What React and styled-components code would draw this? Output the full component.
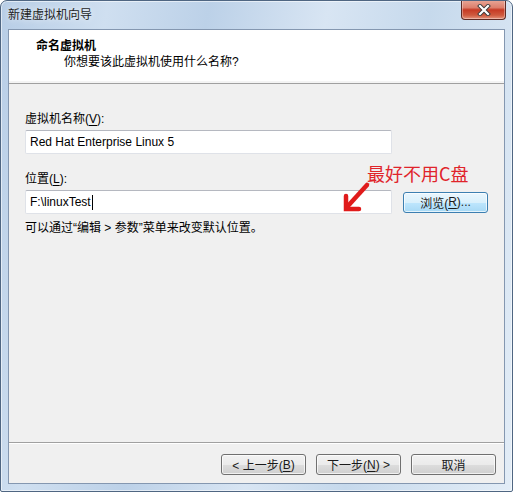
import React from "react";
import styled, { createGlobalStyle } from "styled-components";

const GlobalStyle = createGlobalStyle`
  html, body {
    margin: 0;
    padding: 0;
    background: #ffffff;
  }
  body {
    font-family: "Liberation Sans", "Noto Sans CJK SC", sans-serif;
    font-size: 12px;
    color: #000;
  }
`;

const UI_FONT = `"Liberation Sans", "Noto Sans CJK SC", sans-serif`;

const Window = styled.div`
  position: relative;
  width: 513px;
  height: 492px;
  box-sizing: border-box;
  display: flex;
  flex-direction: column;
  border: 1px solid #4f6682;
  border-radius: 7px 7px 2px 2px;
  background: linear-gradient(
    100deg,
    #b7cde6 0%,
    #cfdff0 18%,
    #bcd1e8 35%,
    #d8e5f3 55%,
    #c6d9ec 72%,
    #e3edf7 100%
  );
  box-shadow: inset 0 0 0 1px rgba(255, 255, 255, 0.55);
  overflow: hidden;
`;

const TitleBar = styled.div`
  height: 28px;
  display: flex;
  align-items: flex-start;
  padding-left: 7px;
`;

const Title = styled.div`
  font-family: ${UI_FONT};
  font-size: 12px;
  line-height: 14px;
  margin-top: 7px;
  color: #1e1e1e;
  text-shadow: 0 0 6px rgba(255, 255, 255, 0.9);
`;

const CloseButton = styled.div`
  margin-left: auto;
  margin-right: 6px;
  margin-top: -1px;
  width: 45px;
  height: 20px;
  box-sizing: border-box;
  border: 1px solid #5d2a24;
  border-top: none;
  border-radius: 0 0 4px 4px;
  background: linear-gradient(
    180deg,
    #e9a898 0%,
    #dd7f6c 40%,
    #c63a24 52%,
    #cf5a3e 80%,
    #e4937c 100%
  );
  box-shadow: inset 0 0 0 1px rgba(255, 255, 255, 0.35);
  display: flex;
  align-items: center;
  justify-content: center;
`;

const Client = styled.div`
  flex: 1;
  margin: 0 7px 7px 7px;
  border: 1px solid #8497b0;
  background: #f0f0f0;
  display: flex;
  flex-direction: column;
`;

const Header = styled.div`
  height: 54px;
  background: #ffffff;
  border-bottom: 1px solid #a0a0a0;
  box-shadow: inset 0 -2px 0 #f4f4f4;
  padding: 8px 0 0 27px;
  box-sizing: border-box;
`;

const HeaderTitle = styled.div`
  font-family: ${UI_FONT};
  font-weight: bold;
  font-size: 12px;
  line-height: 16px;
`;

const HeaderSub = styled.div`
  font-family: ${UI_FONT};
  font-size: 12px;
  line-height: 16px;
  padding-left: 28px;
`;

const Body = styled.div`
  flex: 1;
  padding: 27px 16px 0 16px;
  display: flex;
  flex-direction: column;
`;

const Label = styled.div`
  font-family: ${UI_FONT};
  font-size: 12px;
  line-height: 16px;
  margin-top: ${(p) => p.$top || 0}px;
  margin-bottom: 3px;
`;

const Key = styled.span`
  text-decoration: underline;
  text-underline-offset: 2px;
`;

const Field = styled.div`
  width: 367px;
  height: 24px;
  box-sizing: border-box;
  background: #ffffff;
  border: 1px solid #dfe2e8;
  border-top-color: #b5b8c0;
  border-radius: 2px;
  padding: 0 4px;
  display: flex;
  align-items: center;
  font-family: ${UI_FONT};
  font-size: 12px;
  color: #000;
`;

const Caret = styled.span`
  display: inline-block;
  width: 1px;
  height: 15px;
  background: #000;
  margin-left: 1px;
`;

const Row = styled.div`
  display: flex;
  align-items: center;
  gap: 11px;
`;

const Button = styled.div`
  width: 85px;
  height: 21px;
  box-sizing: border-box;
  border: 1px solid ${(p) => (p.$focused ? "#3c7fb1" : "#707070")};
  border-radius: 3px;
  background: ${(p) =>
    p.$focused
      ? "linear-gradient(180deg, #eaf6fd 0%, #d9f0fc 50%, #bee6fd 51%, #a7d9f5 100%)"
      : "linear-gradient(180deg, #f2f2f2 0%, #ebebeb 50%, #dddddd 51%, #cfcfcf 100%)"};
  box-shadow: inset 0 0 0 1px rgba(255, 255, 255, 0.7);
  display: flex;
  align-items: center;
  justify-content: center;
  font-family: ${UI_FONT};
  font-size: 12px;
  color: #1a1a1a;
`;

const Hint = styled.div`
  font-family: ${UI_FONT};
  font-size: 12px;
  line-height: 16px;
  margin-top: 6px;
`;

const Footer = styled.div`
  height: 41px;
  border-top: 1px solid #a0a0a0;
  box-shadow: inset 0 1px 0 #ffffff;
  display: flex;
  justify-content: flex-end;
  align-items: flex-start;
  gap: 10px;
  padding: 11px 8px 0 0;
  box-sizing: border-box;
`;

const Note = styled.div`
  position: absolute;
  left: 366px;
  top: 160px;
  font-family: "Noto Sans CJK SC", sans-serif;
  font-size: 18px;
  line-height: 24px;
  color: #e0242b;
`;

const Arrow = styled.svg`
  position: absolute;
  left: 338px;
  top: 180px;
`;

export default function App() {
  return (
    <>
      <GlobalStyle />
      <Window>
        <TitleBar>
          <Title>新建虚拟机向导</Title>
          <CloseButton>
            <svg width="14" height="12" viewBox="0 0 14 12">
              <path
                d="M3 2 L11 10 M11 2 L3 10"
                stroke="#3a3a3a"
                strokeWidth="4"
                strokeLinecap="square"
              />
              <path
                d="M3 2 L11 10 M11 2 L3 10"
                stroke="#ffffff"
                strokeWidth="2.2"
                strokeLinecap="square"
              />
            </svg>
          </CloseButton>
        </TitleBar>
        <Client>
          <Header>
            <HeaderTitle>命名虚拟机</HeaderTitle>
            <HeaderSub>你想要该此虚拟机使用什么名称?</HeaderSub>
          </Header>
          <Body>
            <Label>
              虚拟机名称(<Key>V</Key>):
            </Label>
            <Field>Red Hat Enterprise Linux 5</Field>
            <Label $top={17}>
              位置(<Key>L</Key>):
            </Label>
            <Row>
              <Field>
                F:\linuxTest
                <Caret />
              </Field>
              <Button $focused>
                浏览(<Key>R</Key>)...
              </Button>
            </Row>
            <Hint>可以通过“编辑 &gt; 参数”菜单来改变默认位置。</Hint>
          </Body>
          <Footer>
            <Button>
              &lt; 上一步(<Key>B</Key>)
            </Button>
            <Button>
              下一步(<Key>N</Key>) &gt;
            </Button>
            <Button>取消</Button>
          </Footer>
        </Client>
        <Note>最好不用C盘</Note>
        <Arrow width="34" height="34" viewBox="0 0 34 34">
          <path
            d="M28 4 L8 26"
            stroke="#e01b1b"
            strokeWidth="4.5"
            strokeLinecap="round"
          />
          <path
            d="M7 15 L7 28 L20 28"
            fill="none"
            stroke="#e01b1b"
            strokeWidth="4.5"
            strokeLinecap="round"
            strokeLinejoin="miter"
          />
        </Arrow>
      </Window>
    </>
  );
}
